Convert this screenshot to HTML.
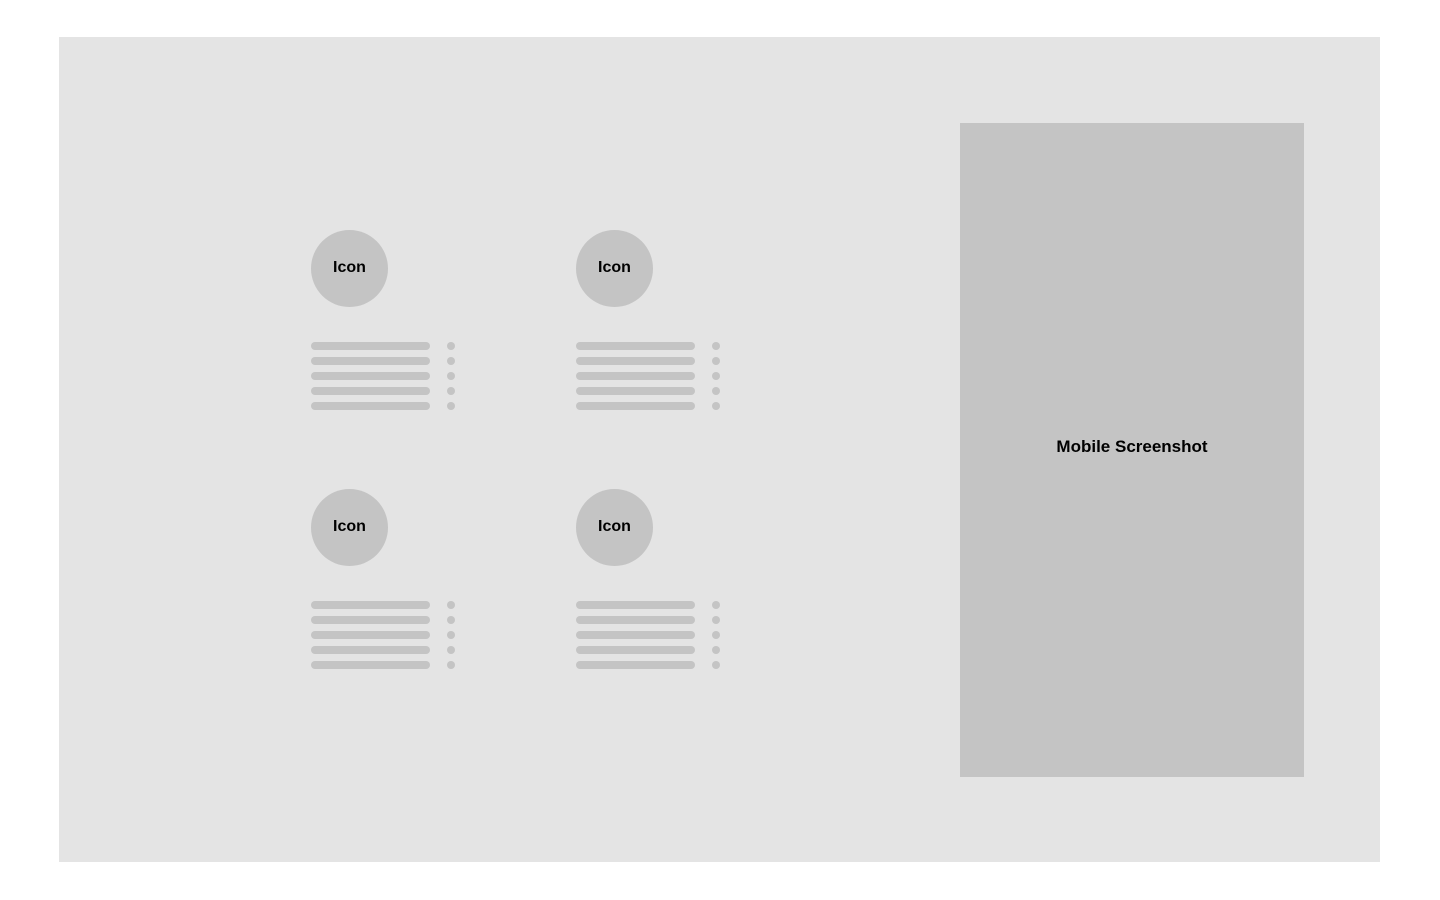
<!DOCTYPE html>
<html><head><style>
body{margin:0;width:1440px;height:900px;background:#fff;position:relative;font-family:"Liberation Sans",sans-serif;}
.panel{position:absolute;left:59px;top:37px;width:1321px;height:825px;background:#e4e4e4;}
.blk{position:absolute;width:160px;height:190px;}
.circ{position:absolute;left:0;top:0;width:77px;height:75px;padding-bottom:2px;border-radius:50%;background:#c4c4c4;display:flex;align-items:center;justify-content:center;font-weight:bold;font-size:16px;color:#000;}
.bar{position:absolute;left:0;width:119px;height:8px;border-radius:4px;background:#c4c4c4;}
.dot{position:absolute;left:136px;width:8px;height:8px;border-radius:50%;background:#c4c4c4;}
.shot{position:absolute;left:960px;top:123px;width:344px;height:648px;padding-bottom:6px;background:#c4c4c4;display:flex;align-items:center;justify-content:center;font-weight:bold;font-size:17px;color:#000;}
</style></head><body>
<div class="panel"></div>
<div class="blk" style="left:311px;top:230px"><div class="circ">Icon</div>
<div class="bar" style="top:112px"></div><div class="dot" style="top:112px"></div>
<div class="bar" style="top:127px"></div><div class="dot" style="top:127px"></div>
<div class="bar" style="top:142px"></div><div class="dot" style="top:142px"></div>
<div class="bar" style="top:157px"></div><div class="dot" style="top:157px"></div>
<div class="bar" style="top:172px"></div><div class="dot" style="top:172px"></div></div>
<div class="blk" style="left:576px;top:230px"><div class="circ">Icon</div>
<div class="bar" style="top:112px"></div><div class="dot" style="top:112px"></div>
<div class="bar" style="top:127px"></div><div class="dot" style="top:127px"></div>
<div class="bar" style="top:142px"></div><div class="dot" style="top:142px"></div>
<div class="bar" style="top:157px"></div><div class="dot" style="top:157px"></div>
<div class="bar" style="top:172px"></div><div class="dot" style="top:172px"></div></div>
<div class="blk" style="left:311px;top:489px"><div class="circ">Icon</div>
<div class="bar" style="top:112px"></div><div class="dot" style="top:112px"></div>
<div class="bar" style="top:127px"></div><div class="dot" style="top:127px"></div>
<div class="bar" style="top:142px"></div><div class="dot" style="top:142px"></div>
<div class="bar" style="top:157px"></div><div class="dot" style="top:157px"></div>
<div class="bar" style="top:172px"></div><div class="dot" style="top:172px"></div></div>
<div class="blk" style="left:576px;top:489px"><div class="circ">Icon</div>
<div class="bar" style="top:112px"></div><div class="dot" style="top:112px"></div>
<div class="bar" style="top:127px"></div><div class="dot" style="top:127px"></div>
<div class="bar" style="top:142px"></div><div class="dot" style="top:142px"></div>
<div class="bar" style="top:157px"></div><div class="dot" style="top:157px"></div>
<div class="bar" style="top:172px"></div><div class="dot" style="top:172px"></div></div>
<div class="shot">Mobile Screenshot</div>
</body></html>
